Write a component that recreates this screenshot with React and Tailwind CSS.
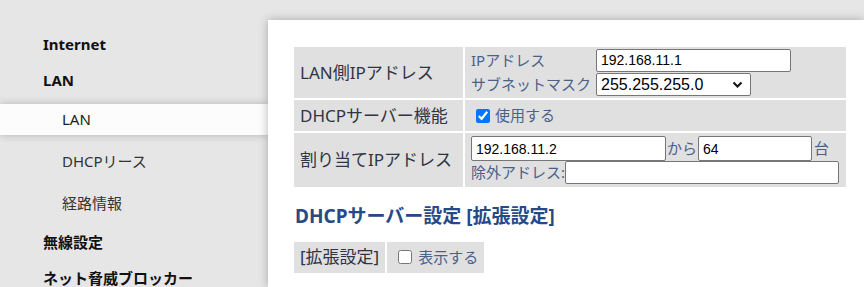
export default function App() {
  const font = { fontFamily: '"Noto Sans", "Noto Sans CJK JP", sans-serif' }
  const mono = { fontFamily: '"Liberation Sans", sans-serif' }

  return (
    <div className="w-[864px] h-[287px] overflow-hidden bg-[#e6e6e6] flex" style={font}>

      {/* SIDEBAR */}
      <div className="w-[268px] shrink-0 pt-[26px] text-[15px]">
        <div className="h-[36px] flex items-center pl-[43px] font-bold text-[#111]">Internet</div>
        <div className="h-[36px] flex items-center pl-[43px] font-bold text-[#111]">LAN</div>
        <div className="h-[42px] pt-[6px]">
          <div className="h-[31px] flex items-center pl-[62px] bg-[#fcfcfc] text-[#222] shadow-[0_0_8px_rgba(0,0,0,0.22)]">LAN</div>
        </div>
        <div className="h-[42px] flex items-center pl-[62px] text-[#333]">DHCPリース</div>
        <div className="h-[42px] flex items-center pl-[62px] text-[#333]">経路情報</div>
        <div className="h-[36px] flex items-center pl-[43px] font-bold text-[#111]">無線設定</div>
        <div className="h-[36px] flex items-center pl-[43px] font-bold text-[#111]">ネット脅威ブロッカー</div>
      </div>

      {/* MAIN PANEL */}
      <div className="relative z-10 flex-1 mt-[20px] bg-white shadow-[0_0_9px_rgba(0,0,0,0.28)] pl-[24px] pt-[25px]">
        <table className="border-separate border-spacing-[2px] w-[556px] text-[17px]">
          <tbody>
            <tr>
              <td className="w-[169px] h-[51px] bg-[#e0e0e0] px-[6px] text-[#2e3545] whitespace-nowrap">LAN側IPアドレス</td>
              <td className="bg-[#e0e0e0] px-[6px] text-[15px] text-[#4a6288]">
                <div className="grid grid-cols-[125px_auto] gap-y-[1px] items-center leading-[23px]">
                  <span>IPアドレス</span>
                  <input
                    defaultValue="192.168.11.1"
                    className="w-[195px] h-[23px] bg-white border border-[#767676] rounded-[2px] px-[4px] text-[14px] text-black"
                    style={mono}
                  />
                  <span>サブネットマスク</span>
                  <div className="relative w-[155px] h-[23px] bg-white border border-[#767676] rounded-[2px]">
                    <span className="absolute left-[4px] top-[1px] text-[16px] leading-[20px] text-black" style={mono}>255.255.255.0</span>
                    <svg className="absolute right-[7px] top-[7px]" width="11" height="8" viewBox="0 0 11 8">
                      <path d="M1.5 1.5 L5.5 5.5 L9.5 1.5" stroke="#111" strokeWidth="2" fill="none" />
                    </svg>
                  </div>
                </div>
              </td>
            </tr>
            <tr>
              <td className="h-[31px] bg-[#e0e0e0] px-[6px] text-[#2e3545] whitespace-nowrap">DHCPサーバー機能</td>
              <td className="bg-[#e0e0e0] px-[6px] text-[15px] text-[#4a6288]">
                <label className="flex items-center gap-[5px] pl-[5px]">
                  <input type="checkbox" defaultChecked className="w-[14px] h-[14px] m-0 accent-[#0075ff]" />
                  <span>使用する</span>
                </label>
              </td>
            </tr>
            <tr>
              <td className="h-[54px] bg-[#e0e0e0] px-[6px] text-[#2e3545] whitespace-nowrap">割り当てIPアドレス</td>
              <td className="bg-[#e0e0e0] px-[6px] text-[15px] text-[#4a6288] leading-[23px]">
                <div className="flex items-center">
                  <input
                    defaultValue="192.168.11.2"
                    className="w-[195px] h-[25px] bg-white border border-[#767676] rounded-[2px] px-[4px] text-[14px] text-black"
                    style={mono}
                  />
                  <span className="px-[1px] whitespace-nowrap">から</span>
                  <input
                    defaultValue="64"
                    className="w-[114px] h-[25px] bg-white border border-[#767676] rounded-[2px] px-[4px] text-[14px] text-black"
                    style={mono}
                  />
                  <span className="pl-[2px]">台</span>
                </div>
                <div className="flex items-center">
                  <span className="w-[94px] shrink-0 whitespace-nowrap overflow-hidden">除外アドレス:</span>
                  <input
                    className="w-[274px] h-[23px] bg-white border border-[#767676] rounded-[2px] px-[4px] text-[14px] text-black"
                  />
                </div>
              </td>
            </tr>
          </tbody>
        </table>

        <h2 className="mt-[13px] ml-[3px] text-[19px] font-bold text-[#264a88]">DHCPサーバー設定 [拡張設定]</h2>

        <table className="border-separate border-spacing-[2px] mt-[9px] text-[17px]">
          <tbody>
            <tr>
              <td className="h-[31px] w-[91px] bg-[#e0e0e0] px-[6px] text-[#2e3545] whitespace-nowrap">[拡張設定]</td>
              <td className="w-[96px] bg-[#e0e0e0] px-[6px] text-[15px] text-[#4a6288] whitespace-nowrap">
                <label className="flex items-center gap-[6px] pl-[5px]">
                  <input type="checkbox" className="w-[14px] h-[14px] m-0" />
                  <span>表示する</span>
                </label>
              </td>
            </tr>
          </tbody>
        </table>
      </div>

    </div>
  )
}
